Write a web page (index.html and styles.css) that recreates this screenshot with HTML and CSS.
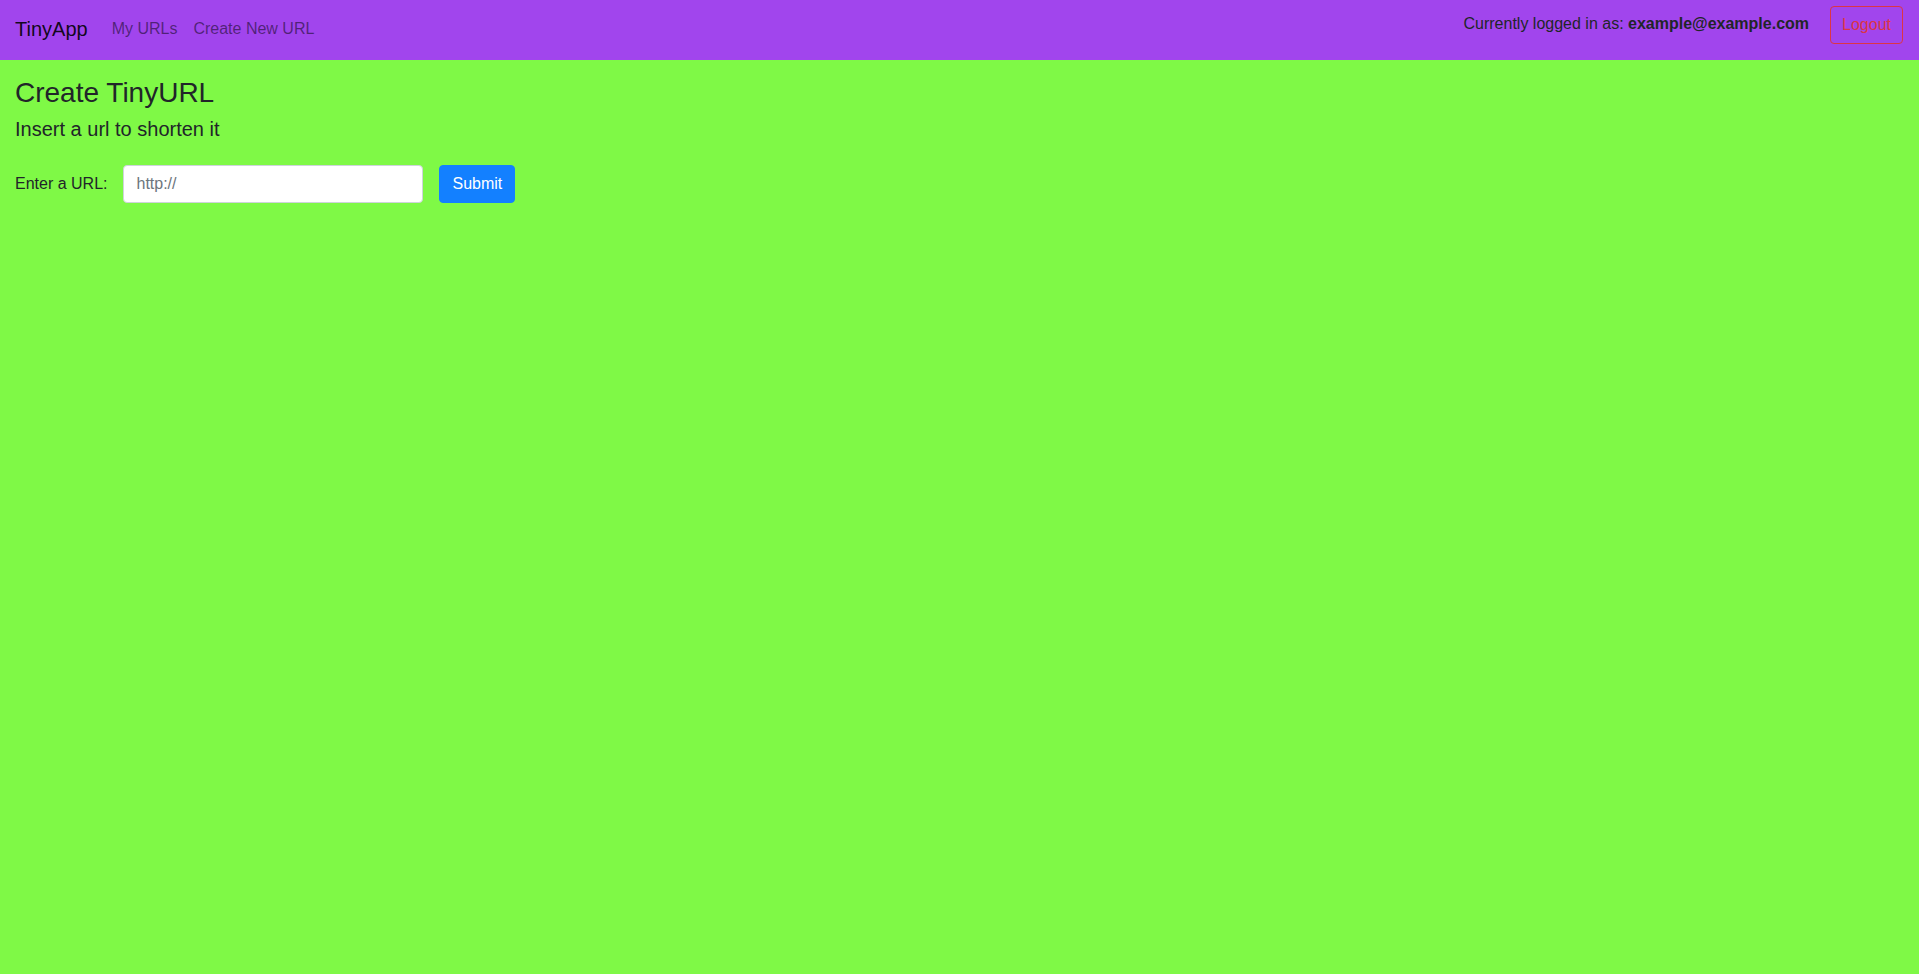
FILE: index.html
```html
<!DOCTYPE html>
<html lang="en">
<head>
<meta charset="utf-8">
<title>TinyApp</title>
<link rel="stylesheet" href="styles.css">
</head>
<body>
<nav class="navbar">
  <div class="nav-left">
    <a class="brand" href="#">TinyApp</a>
    <a class="nav-link" href="#">My URLs</a>
    <a class="nav-link" href="#">Create New URL</a>
  </div>
  <div class="nav-right">
    <span class="login-text">Currently logged in as: <b>example@example.com</b></span>
    <button class="btn-logout" type="button">Logout</button>
  </div>
</nav>
<main class="main">
  <h3 class="title">Create TinyURL</h3>
  <h5 class="subtitle">Insert a url to shorten it</h5>
  <form class="url-form">
    <label class="url-label" for="longURL">Enter a URL:</label>
    <input class="url-input" id="longURL" type="text" placeholder="http://">
    <button class="btn-submit" type="button">Submit</button>
  </form>
</main>
</body>
</html>
```

FILE: styles.css
```css
* { box-sizing: border-box; }
html, body { margin: 0; padding: 0; }
body {
  background: #7ff946;
  font-family: "Liberation Sans", Arial, sans-serif;
  font-size: 16px;
  line-height: 1.5;
  color: #212529;
  min-height: 974px;
}
.navbar {
  height: 60px;
  background: #a145ed;
  display: flex;
  justify-content: space-between;
  align-items: flex-start;
  padding: 0 16px 0 15px;
}
.nav-left {
  display: flex;
  align-items: flex-start;
  padding-top: 9px;
}
.brand {
  font-size: 20px;
  line-height: 30px;
  padding: 5px 0;
  margin-right: 16px;
  color: rgba(0, 0, 0, 0.9);
  text-decoration: none;
}
.nav-link {
  padding: 8px 8px;
  line-height: 24px;
  color: rgba(0, 0, 0, 0.5);
  text-decoration: none;
}
.nav-right {
  display: flex;
  align-items: center;
  padding-top: 6px;
}
.login-text {
  color: #212529;
  margin-right: 21px;
  margin-bottom: 2px;
}
.btn-logout {
  font-family: inherit;
  font-size: 16px;
  line-height: 24px;
  height: 38px;
  padding: 6px 11px;
  background: transparent;
  color: #dc3545;
  border: 1px solid #dc3545;
  border-radius: 4px;
}
.main {
  padding: 16px 15px 0;
}
.title {
  font-size: 28px;
  font-weight: 500;
  line-height: 1.2;
  margin: 0 0 7px;
}
.subtitle {
  font-size: 20px;
  font-weight: 500;
  line-height: 1.2;
  margin: 0 0 8px;
}
.url-form {
  display: flex;
  align-items: center;
  margin-top: 24px;
}
.url-label {
  margin-right: 16px;
}
.url-input {
  width: 300px;
  height: 38px;
  padding: 6px 12px;
  font-family: inherit;
  font-size: 16px;
  color: #495057;
  background: #fff;
  border: 1px solid #ced4da;
  border-radius: 4px;
  margin-right: 16px;
}
.url-input::placeholder { color: #6c757d; }
.btn-submit {
  font-family: inherit;
  font-size: 16px;
  line-height: 24px;
  height: 38px;
  padding: 6px 12px;
  background: #1380ff;
  color: #fff;
  border: 1px solid #1380ff;
  border-radius: 4px;
}
```
